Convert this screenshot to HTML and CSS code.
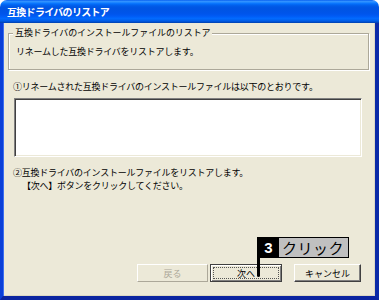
FILE: index.html
```html
<!DOCTYPE html>
<html lang="ja">
<head>
  <meta charset="UTF-8">
  <title>互換ドライバのリストア</title>
  <link rel="stylesheet" href="styles.css">
</head>
<body>
  <div class="ventana">

    <!-- Barra de título -->
    <div class="titulo">互換ドライバのリストア</div>

    <div class="cliente">

      <!-- Grupo -->
      <fieldset class="grupo">
        <legend>互換ドライバのインストールファイルのリストア</legend>
        <div class="grupo-texto">リネームした互換ドライバをリストアします。</div>
      </fieldset>

      <div class="texto paso1">①リネームされた互換ドライバのインストールファイルは以下のとおりです。</div>
      <div class="lista"></div>

      <div class="texto paso2">
        <div>②互換ドライバのインストールファイルをリストアします。</div>
        <div class="sangria">【次へ】ボタンをクリックしてください。</div>
      </div>

      <!-- Botones -->
      <div class="botones">
        <button class="boton atras" disabled>戻る</button>
        <button class="boton siguiente"><span class="foco">次へ</span></button>
        <button class="boton cancelar">キャンセル</button>
      </div>
    </div>

    <!-- Indicación -->
    <div class="aviso">
      <span class="aviso-num">3</span>
      <span class="aviso-texto">クリック</span>
    </div>
    <div class="aviso-linea"></div>
  </div>
</body>
</html>
```

FILE: styles.css
```css
body {
  margin: 0;
  background: #fff;
  font-family: "Noto Sans CJK JP", sans-serif;
}

.ventana {
  position: relative;
  width: 379px;
  height: 300px;
  display: flex;
  flex-direction: column;
}

.titulo {
  height: 23px;
  box-sizing: border-box;
  padding-left: 7px;
  display: flex;
  align-items: center;
  color: #fff;
  font-weight: bold;
  font-size: 10px;
  letter-spacing: -0.7px;
  border-radius: 7px 7px 0 0;
  background: linear-gradient(to bottom, #0058ee 0%, #3593ff 5%, #288eff 9%, #127dff 13%, #036ffc 17%, #0262ee 22%, #0057e5 30%, #0054e3 40%, #0055eb 60%, #005bf5 70%, #026afe 80%, #0062ef 88%, #0052d6 94%, #0040ab 100%);
}

.cliente {
  flex: 1;
  display: flex;
  flex-direction: column;
  background: #ece9d8;
  border-left: 3px solid #0a3fd8;
  border-right: 4px solid #0a2aa8;
  border-bottom: 4px solid #0a24a0;
  box-shadow: inset 1px 0 #3c6ef0, inset -1px 0 #dcd8c4, inset 0 -1px #dcd8c4;
  padding: 4px 6px 14px 5px;
  font-size: 9px;
  color: #000;
}

.grupo {
  margin: 0;
  padding: 7px 4px 11px;
  border: 1px solid #aca899;
  box-shadow: inset 1px 1px #fff, 1px 1px #fff;
}

.grupo legend {
  padding: 0 2px;
  line-height: 12px;
  letter-spacing: -0.1px;
  background: #ece9d8;
}

.grupo-texto {
  padding-left: 3px;
  line-height: 12px;
  letter-spacing: -0.25px;
}

.texto {
  line-height: 12px;
  letter-spacing: -0.25px;
}

.paso1 {
  margin-top: 11px;
  padding-left: 5px;
}

.lista {
  margin: 5px 0 0 6px;
  width: 348px;
  height: 59px;
  box-sizing: border-box;
  background: #fff;
  border: 1px solid;
  border-color: #808080 #fff #fff #808080;
  box-shadow: inset 1px 1px #404040, inset -1px -1px #ece9d8;
}

.paso2 {
  margin-top: 9px;
  padding-left: 5px;
  line-height: 13px;
}

.sangria {
  padding-left: 9px;
}

.botones {
  margin-top: auto;
  display: flex;
  justify-content: flex-end;
  gap: 2px;
  padding-right: 8px;
}

.boton {
  height: 18px;
  padding: 0;
  font-family: inherit;
  font-size: 9px;
  background: #ece9d8;
  color: #000;
  border: 1px solid;
  border-color: #fff #404040 #404040 #fff;
  box-shadow: inset -1px -1px #808080;
}

.atras {
  width: 71px;
  color: #aca899;
  border-color: #fff #aca899 #aca899 #fff;
  box-shadow: none;
}

.siguiente {
  width: 72px;
  border-color: #404040;
  box-shadow: inset 1px 1px #fff, inset -1px -1px #808080;
  display: flex;
  padding: 2px;
}

.foco {
  flex: 1;
  display: flex;
  align-items: center;
  justify-content: center;
  border: 1px dotted #555;
}

.cancelar {
  width: 67px;
  margin-left: 10px;
}

.aviso {
  position: absolute;
  left: 257px;
  top: 237px;
  width: 92px;
  height: 21px;
  box-sizing: border-box;
  display: flex;
  border: 1px solid #000;
  background: #c0c0c0;
}

.aviso-num {
  width: 21px;
  background: #000;
  color: #fff;
  font-family: "Liberation Sans", sans-serif;
  font-weight: bold;
  font-size: 15px;
  display: flex;
  align-items: center;
  justify-content: center;
}

.aviso-texto {
  flex: 1;
  padding-left: 3px;
  font-size: 15px;
  line-height: 19px;
  letter-spacing: 0.5px;
  color: #000;
}

.aviso-linea {
  position: absolute;
  left: 257px;
  top: 257px;
  width: 3px;
  height: 20px;
  background: #000;
  border-radius: 0 0 2px 2px;
}
```
